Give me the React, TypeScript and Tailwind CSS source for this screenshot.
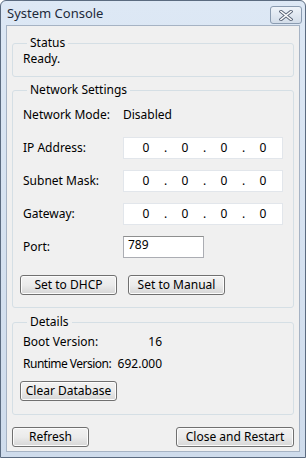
import React from 'react';

const font = { fontFamily: '"Noto Sans", "Open Sans", Arial, sans-serif' };

function GroupBox({ title, className, children }: { title: string; className?: string; children: React.ReactNode }) {
  return (
    <fieldset className={`border border-[#d5dfe5] rounded-[3px] mx-[5px] px-[10px] ${className ?? ''}`}>
      <legend className="ml-[4px] px-[3px] text-[12px] leading-[14px] text-black">{title}</legend>
      {children}
    </fieldset>
  );
}

function IpBox() {
  return (
    <div className="w-[160px] h-[22px] bg-white border border-[#e2e6eb] flex items-center pl-[16px] text-[12px]">
      <span className="w-[12px] text-center">0</span>
      <span className="w-[27px] text-center">.</span>
      <span className="w-[12px] text-center">0</span>
      <span className="w-[27px] text-center">.</span>
      <span className="w-[12px] text-center">0</span>
      <span className="w-[27px] text-center">.</span>
      <span className="w-[12px] text-center">0</span>
    </div>
  );
}

function WinButton({ label, w }: { label: string; w: string }) {
  return (
    <button
      className={`${w} h-[20px] rounded-[3px] border border-[#707070] bg-gradient-to-b from-[#f2f2f2] via-[#ebebeb] to-[#d6d6d6] text-[12px] leading-[16px] text-black shadow-[inset_0_0_0_1px_#fcfcfc]`}
    >
      {label}
    </button>
  );
}

function Row({ label, children }: { label: string; children: React.ReactNode }) {
  return (
    <div className="flex items-center h-[22px]">
      <span className="w-[100px] text-[12px]">{label}</span>
      {children}
    </div>
  );
}

export default function App() {
  return (
    <div
      style={font}
      className="w-[306px] h-[458px] bg-gradient-to-b from-[#dde8f5] to-[#cfdcec] border border-[#5b6b80] rounded-t-[6px] flex flex-col text-black"
    >
      {/* title bar */}
      <div className="h-[24px] flex items-center justify-between pl-[6px] pr-[3px]">
        <span className="text-[13px] text-[#1e2a3a] mt-[2px]">System Console</span>
        <div className="w-[32px] h-[18px] mt-[4px] rounded-[3px] border border-[#8a9bb0] bg-gradient-to-b from-[#eef3f9] to-[#d3dde9] flex items-center justify-center">
          <svg width="14" height="11" viewBox="0 0 14 11">
            <path d="M2 1.5 L12 9.5 M12 1.5 L2 9.5" stroke="#5a6578" strokeWidth="3.4" strokeLinecap="square" />
            <path d="M2 1.5 L12 9.5 M12 1.5 L2 9.5" stroke="#ffffff" strokeWidth="1.6" strokeLinecap="square" />
          </svg>
        </div>
      </div>

      {/* client area */}
      <div className="flex-1 mx-[5px] mb-[5px] bg-[#f0f0f0] border border-[#a6b3c4] flex flex-col pt-[10px]">
        <GroupBox title="Status" className="pb-[9px]">
          <div className="text-[12px] pt-[1px] leading-[16px]">Ready.</div>
        </GroupBox>

        <GroupBox title="Network Settings" className="mt-[6px] pb-[12px]">
          <div className="flex flex-col gap-[11px] pt-[7px]">
            <Row label="Network Mode:">
              <span className="text-[12px]">Disabled</span>
            </Row>
            <Row label="IP Address:">
              <IpBox />
            </Row>
            <Row label="Subnet Mask:">
              <IpBox />
            </Row>
            <Row label="Gateway:">
              <IpBox />
            </Row>
            <Row label="Port:">
              <div className="w-[81px] h-[22px] bg-white border border-[#abadb3] border-t-[#8e8f8f] pl-[4px] text-[12px] leading-[16px]">
                789
              </div>
            </Row>
          </div>
          <div className="flex gap-[11px] mt-[17px] -ml-[3px]">
            <WinButton label="Set to DHCP" w="w-[97px]" />
            <WinButton label="Set to Manual" w="w-[97px]" />
          </div>
        </GroupBox>

        <GroupBox title="Details" className="mt-[7px] pb-[13px]">
          <div className="flex flex-col gap-[6px] pt-[5px] text-[12px]">
            <div className="flex items-center h-[16px]">
              <span className="w-[97px]">Boot Version:</span>
              <span className="w-[42px] text-right">16</span>
            </div>
            <div className="flex items-center h-[16px]">
              <span className="w-[94px] tracking-[-0.5px] whitespace-nowrap">Runtime Version:</span>
              <span className="w-[45px] text-right whitespace-nowrap">692.000</span>
            </div>
          </div>
          <div className="mt-[5px] -ml-[3px]">
            <WinButton label="Clear Database" w="w-[97px]" />
          </div>
        </GroupBox>

        <div className="flex justify-between px-[5px] mt-[12px]">
          <WinButton label="Refresh" w="w-[77px]" />
          <WinButton label="Close and Restart" w="w-[118px]" />
        </div>
      </div>
    </div>
  );
}
